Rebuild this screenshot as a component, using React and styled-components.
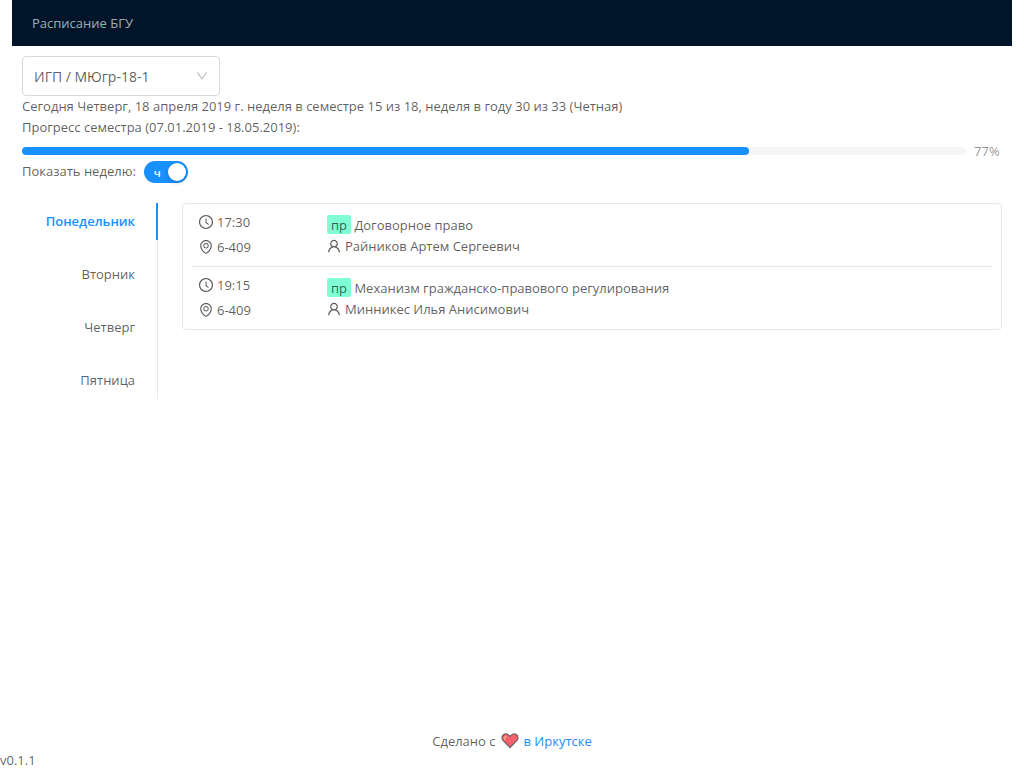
import React, { useState } from "react";
import styled, { createGlobalStyle } from "styled-components";
import {
  AiOutlineClockCircle,
  AiOutlineDown,
  AiOutlineEnvironment,
  AiOutlineUser,
} from "react-icons/ai";

const GlobalStyle = createGlobalStyle`
  *, *::before, *::after { box-sizing: border-box; }
  body {
    margin: 0;
    background: #fff;
    color: rgba(0, 0, 0, 0.65);
    font: 13px/21px "Open Sans", "Noto Sans", sans-serif;
  }
  button, select { font: inherit; color: inherit; }
`;

const Page = styled.div`
  display: flex;
  flex-direction: column;
  min-height: 100vh;
`;

const Header = styled.header`
  margin: 0 12px;
  padding: 0 20px;
  height: 46px;
  line-height: 46px;
  background: #001529;
  color: rgba(255, 255, 255, 0.65);
`;

const Main = styled.main`
  flex: 1;
  padding: 10px 22px;
`;

const SelectBox = styled.div`
  position: relative;
  width: 198px;
  height: 40px;
`;

const GroupSelect = styled.select`
  appearance: none;
  width: 100%;
  height: 100%;
  padding: 0 32px 0 11px;
  border: 1px solid #d9d9d9;
  border-radius: 4px;
  background: #fff;
  font-size: 14px;
`;

const SelectArrow = styled(AiOutlineDown)`
  position: absolute;
  top: 14px;
  right: 12px;
  width: 12px;
  height: 12px;
  color: rgba(0, 0, 0, 0.3);
  pointer-events: none;
`;

const Line = styled.p`
  margin: 0;
`;

const Progress = styled.div`
  display: flex;
  align-items: center;
  gap: 8px;
  height: 22px;
  margin-top: 1px;
  padding-top: 2px;
  color: rgba(0, 0, 0, 0.45);
`;

const ProgressTrack = styled.div`
  flex: 1;
  height: 8px;
  border-radius: 4px;
  background: #f5f5f5;
`;

const ProgressFill = styled.div`
  height: 8px;
  border-radius: 4px;
  background: #1890ff;
`;

const ProgressValue = styled.span`
  width: 28px;
`;

const WeekRow = styled.div`
  display: flex;
  gap: 8px;
  height: 22px;
  line-height: 20px;
`;

const Switch = styled.label`
  position: relative;
  width: 44px;
  height: 22px;
  border-radius: 11px;
  background: ${(p) => (p.$on ? "#1890ff" : "#bfbfbf")};
  color: #fff;
  font-size: 11px;
  font-weight: 600;
  line-height: 24px;
  padding: 0 10px;
  text-align: ${(p) => (p.$on ? "left" : "right")};
  cursor: pointer;
`;

const SwitchInput = styled.input`
  position: absolute;
  inset: 0;
  width: 100%;
  height: 100%;
  margin: 0;
  opacity: 0;
  cursor: pointer;
`;

const SwitchKnob = styled.span`
  position: absolute;
  top: 2px;
  left: ${(p) => (p.$on ? "24px" : "2px")};
  width: 18px;
  height: 18px;
  border-radius: 50%;
  background: #fff;
  box-shadow: 0 2px 4px rgba(0, 35, 11, 0.2);
  pointer-events: none;
`;

const Schedule = styled.div`
  display: flex;
  align-items: flex-start;
  gap: 24px;
  margin-top: 20px;
`;

const Tabs = styled.div`
  display: flex;
  flex-direction: column;
  gap: 16px;
  width: 136px;
  box-shadow: inset -1px 0 #e8e8e8;
`;

const Tab = styled.button`
  height: 37px;
  padding: 0 21px 0 0;
  border: 0;
  border-right: 2px solid ${(p) => (p.$active ? "#1890ff" : "transparent")};
  background: none;
  color: ${(p) => (p.$active ? "#1890ff" : "inherit")};
  font-weight: ${(p) => (p.$active ? 600 : 400)};
  text-align: right;
  cursor: pointer;
`;

const Lessons = styled.ul`
  flex: 1;
  margin: 0;
  padding: 0 9px 0 8px;
  border: 1px solid #e8e8e8;
  border-radius: 4px;
  list-style: none;
`;

const Lesson = styled.li`
  display: grid;
  grid-template-columns: 128px 1fr;
  padding: 8px;
  & + & { border-top: 1px solid #e8e8e8; }
`;

const Place = styled.div`
  display: flex;
  flex-direction: column;
  gap: 4px;
`;

const Subject = styled.div`
  padding-top: 3px;
`;

const IconLine = styled.div`
  display: flex;
  gap: 4px;
  svg {
    flex: none;
    width: 14px;
    height: 14px;
    margin-top: 3px;
  }
`;

const Kind = styled.span`
  display: inline-block;
  padding: 0 4px;
  height: 19px;
  border-radius: 2px;
  background: #7fffd4;
`;

const Footer = styled.footer`
  line-height: 20px;
`;

const MadeIn = styled.div`
  display: flex;
  justify-content: center;
  align-items: center;
  gap: 5px;
`;

const Version = styled.div`
  line-height: 18px;
`;

const FooterLink = styled.a`
  color: #1890ff;
  text-decoration: none;
`;

const days = ["Понедельник", "Вторник", "Четверг", "Пятница"];
const lessons = [
  { time: "17:30", room: "6-409", kind: "пр", name: "Договорное право", teacher: "Райников Артем Сергеевич" },
  { time: "19:15", room: "6-409", kind: "пр", name: "Механизм гражданско-правового регулирования", teacher: "Минникес Илья Анисимович" },
];
const progress = 77;

// Crops the empty margin of the Ant Design glyphs.
const glyphBox = "64 64 896 896";

function Heart() {
  return (
    <svg width="18" height="16" viewBox="0 0 18 16" aria-label="любовью" role="img">
      <path d="M9 14.5 2.2 7.7C.5 5.9.7 3.3 2.2 2 4 .5 6.7.8 9 3.4 11.3.8 14 .5 15.8 2c1.5 1.3 1.7 3.9 0 5.7Z" fill="#f5606d" stroke="#6c6266" strokeWidth="1.2" strokeLinejoin="round" />
      <path d="M3.6 6.2C3.2 4.8 4 3.6 5.3 3.6" fill="none" stroke="#ffa08f" strokeWidth="1.5" strokeLinecap="round" />
    </svg>
  );
}

export default function App() {
  const [active, setActive] = useState(0);
  const [even, setEven] = useState(true);
  return (
    <Page>
      <GlobalStyle />
      <Header>Расписание БГУ</Header>
      <Main>
        <SelectBox>
          <GroupSelect aria-label="Группа">
            <option>ИГП / МЮгр-18-1</option>
          </GroupSelect>
          <SelectArrow viewBox={glyphBox} />
        </SelectBox>
        <Line>Сегодня Четверг, 18 апреля 2019 г. неделя в семестре 15 из 18, неделя в году 30 из 33 (Четная)</Line>
        <Line>Прогресс семестра (07.01.2019 - 18.05.2019):</Line>
        <Progress>
          <ProgressTrack>
            <ProgressFill style={{ width: `${progress}%` }} />
          </ProgressTrack>
          <ProgressValue>{progress}%</ProgressValue>
        </Progress>
        <WeekRow>
          <label htmlFor="week">Показать неделю:</label>
          <Switch $on={even}>
            <SwitchInput id="week" type="checkbox" role="switch" checked={even} onChange={(e) => setEven(e.target.checked)} />
            {even ? "ч" : "н"}
            <SwitchKnob $on={even} />
          </Switch>
        </WeekRow>
        <Schedule>
          <Tabs role="tablist" aria-orientation="vertical">
            {days.map((day, i) => (
              <Tab key={day} type="button" role="tab" aria-selected={i === active} $active={i === active} onClick={() => setActive(i)}>
                {day}
              </Tab>
            ))}
          </Tabs>
          <Lessons>
            {lessons.map((lesson) => (
              <Lesson key={lesson.time}>
                <Place>
                  <IconLine><AiOutlineClockCircle viewBox={glyphBox} />{lesson.time}</IconLine>
                  <IconLine><AiOutlineEnvironment viewBox={glyphBox} />{lesson.room}</IconLine>
                </Place>
                <Subject>
                  <div><Kind>{lesson.kind}</Kind> {lesson.name}</div>
                  <IconLine><AiOutlineUser viewBox={glyphBox} />{lesson.teacher}</IconLine>
                </Subject>
              </Lesson>
            ))}
          </Lessons>
        </Schedule>
      </Main>
      <Footer>
        <MadeIn>
          Сделано с <Heart /> <FooterLink href="#">в Иркутске</FooterLink>
        </MadeIn>
        <Version>v0.1.1</Version>
      </Footer>
    </Page>
  );
}
